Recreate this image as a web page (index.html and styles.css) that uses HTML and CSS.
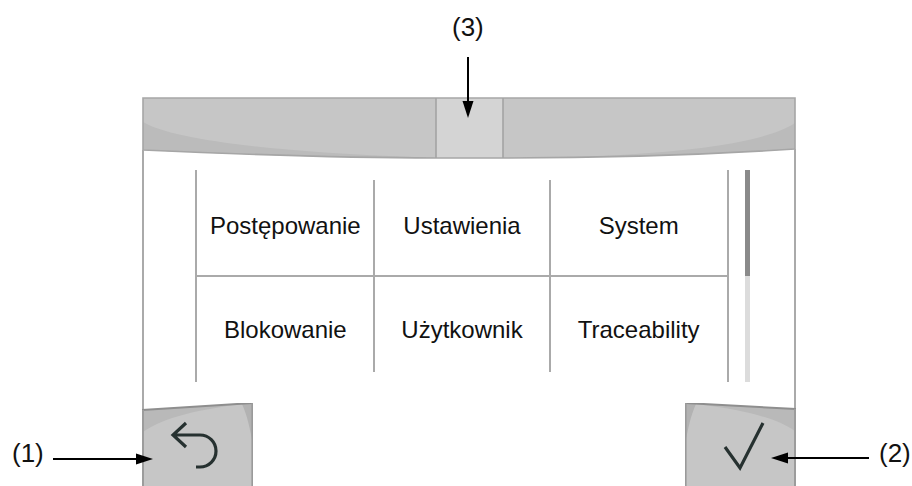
FILE: index.html
```html
<!DOCTYPE html>
<html lang="pl">
<head>
<meta charset="utf-8">
<title>Menu</title>
<link rel="stylesheet" href="styles.css">
</head>
<body>
<div class="figure">
  <div class="screen">
    <svg class="topbar" width="654" height="62" viewBox="0 0 654 62">
      <path d="M1,1 H653 V52 C560,58 450,61 361,61 H294 C200,61 90,57 1,53 Z" fill="#c6c6c6"/>
      <path d="M1,25 C30,42 120,54 270,60 L294,61 C200,61 90,57 1,53 Z" fill="#bbbbbb"/>
      <path d="M653,26 C625,44 560,55 440,60 C520,59 600,56 653,52 Z" fill="#bbbbbb"/>
      <rect x="294" y="1" width="67" height="60" fill="#d4d4d4"/>
      <path d="M1,1 H653 V52 C560,58 450,61 361,61 H294 C200,61 90,57 1,53 Z" fill="none" stroke="#a6a6a6" stroke-width="1.6"/>
      <path d="M294,1 V61 M361,1 V61" stroke="#a3a3a3" stroke-width="1.6"/>
      <rect x="0" y="53" width="2" height="9" fill="#aaaaaa"/>
      <rect x="652" y="52" width="2" height="10" fill="#aaaaaa"/>
    </svg>
    <div class="body">
      <div class="menu">
        <div class="cell r1">Postępowanie</div>
        <div class="cell r1 sep">Ustawienia</div>
        <div class="cell r1 sep">System</div>
        <div class="cell r2">Blokowanie</div>
        <div class="cell r2 sep">Użytkownik</div>
        <div class="cell r2 sep">Traceability</div>
      </div>
      <div class="scrollbar"><div class="thumb"></div></div>
    </div>
    <div class="buttons">
      <svg class="btn" width="111" height="83" viewBox="0 0 111 83">
        <rect x="0" y="0" width="2" height="8" fill="#aaaaaa"/>
        <polygon points="0,7 111,0 111,83 0,83" fill="#c6c6c6"/>
        <path d="M1,7 L100,1 C60,6 22,14 1,29 Z" fill="#b9b9b9"/>
        <path d="M100,1 L111,0 L111,42 C108,25 105,12 100,1 Z" fill="#b2b2b2"/>
        <path d="M0,7 L111,0" stroke="#8e8e8e" stroke-width="2"/>
        <path d="M1,7 V83" stroke="#9c9c9c" stroke-width="2"/>
        <path d="M110.2,0 V83" stroke="#9a9a9a" stroke-width="1.6"/>
        <path d="M44,20 L31,32 L44,44 M31,32 H58 A16,16 0 0 1 58,64 H54" fill="none" stroke="#263130" stroke-width="3.2"/>
      </svg>
      <svg class="btn" width="111" height="83" viewBox="0 0 111 83">
        <g transform="translate(111,0) scale(-1,1)">
          <rect x="0" y="0" width="2" height="8" fill="#aaaaaa"/>
          <polygon points="0,6 111,0 111,83 0,83" fill="#c6c6c6"/>
          <path d="M1,6 L100,1 C60,6 22,13 1,28 Z" fill="#b9b9b9"/>
          <path d="M100,1 L111,0 L111,42 C108,25 105,12 100,1 Z" fill="#b2b2b2"/>
          <path d="M0,6 L111,0" stroke="#8e8e8e" stroke-width="2"/>
          <path d="M1,6 V83" stroke="#9c9c9c" stroke-width="2"/>
          <path d="M110.2,0 V83" stroke="#9a9a9a" stroke-width="1.6"/>
        </g>
        <path d="M40,44 L55,65 L78,20" fill="none" stroke="#263130" stroke-width="3.2"/>
      </svg>
    </div>
  </div>

  <div class="label l3">(3)</div>
  <div class="label l1">(1)</div>
  <div class="label l2">(2)</div>
  <svg class="arrows" width="912" height="486" viewBox="0 0 912 486">
    <path d="M468,57 V104 M53,459 H138 M786,458 H869" stroke="#000" stroke-width="2"/>
    <polygon points="468,118 462.5,101 473.5,101" fill="#000"/>
    <polygon points="153,459 136,453.5 136,464.5" fill="#000"/>
    <polygon points="771,458 788,452.5 788,463.5" fill="#000"/>
  </svg>
</div>
</body>
</html>
```

FILE: styles.css
```css
html, body {
  margin: 0;
  padding: 0;
  background: #ffffff;
}

body {
  font-family: "Liberation Sans", Arial, sans-serif;
  color: #111111;
}

.figure {
  position: relative;
  width: 912px;
  height: 486px;
  overflow: hidden;
  padding-top: 97px;
  box-sizing: border-box;
}

.screen {
  margin-left: 142px;
  width: 654px;
}

.topbar {
  display: block;
}

.body {
  height: 244px;
  box-sizing: border-box;
  border-left: 2px solid #aaaaaa;
  border-right: 2px solid #aaaaaa;
  display: flex;
  align-items: flex-start;
  padding: 11px 0 0 51px;
}

.menu {
  width: 534px;
  height: 212px;
  box-sizing: border-box;
  border-left: 2px solid #aaaaaa;
  border-right: 2px solid #aaaaaa;
  display: grid;
  grid-template-columns: repeat(3, 1fr);
  grid-template-rows: 107px 105px;
}

.cell {
  position: relative;
  display: flex;
  align-items: center;
  justify-content: center;
  font-size: 24px;
  color: #111111;
}

.cell.r1 {
  border-bottom: 2px solid #aaaaaa;
  padding-top: 6px;
}

.cell.sep::before {
  content: "";
  position: absolute;
  left: -1px;
  width: 2px;
  background: #aaaaaa;
}

.cell.r1.sep::before {
  top: 10px;
  bottom: -2px;
}

.cell.r2.sep::before {
  top: 0;
  bottom: 10px;
}

.scrollbar {
  margin-left: 16px;
  width: 5px;
  height: 212px;
  background: #dcdcdc;
}

.thumb {
  height: 106px;
  background: #8a8a8a;
}

.buttons {
  display: flex;
  justify-content: space-between;
  height: 83px;
}

.btn {
  display: block;
}

.label {
  position: absolute;
  font-size: 26px;
  line-height: 26px;
  color: #111111;
}

.l3 {
  left: 452px;
  top: 14px;
}

.l1 {
  left: 12px;
  top: 440px;
}

.l2 {
  left: 879px;
  top: 440px;
}

.arrows {
  position: absolute;
  left: 0;
  top: 0;
  pointer-events: none;
}
```
